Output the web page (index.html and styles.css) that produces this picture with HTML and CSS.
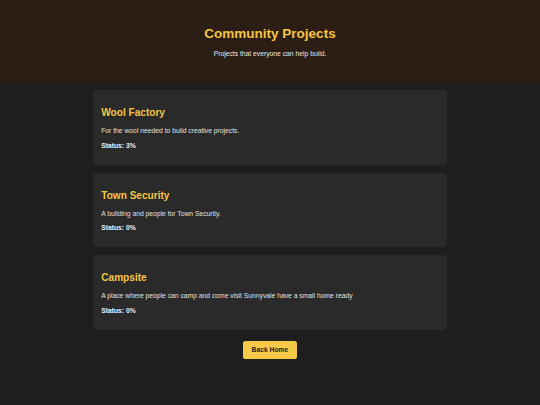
FILE: index.html
```html
<!DOCTYPE html>
<html lang="en">
<head>
<meta charset="utf-8">
<title>Community Projects</title>
<link rel="stylesheet" href="styles.css">
</head>
<body>
<header class="site-header">
  <h1 class="site-title">Community Projects</h1>
  <p class="site-subtitle">Projects that everyone can help build.</p>
</header>
<main class="container">
  <section class="project-card">
    <h2 class="project-title">Wool Factory</h2>
    <p class="project-desc">For the wool needed to build creative projects.</p>
    <p class="project-status">Status: 3%</p>
  </section>
  <section class="project-card">
    <h2 class="project-title">Town Security</h2>
    <p class="project-desc">A building and people for Town Security.</p>
    <p class="project-status">Status: 0%</p>
  </section>
  <section class="project-card">
    <h2 class="project-title">Campsite</h2>
    <p class="project-desc">A place where people can camp and come visit Sunnyvale have a small home ready</p>
    <p class="project-status">Status: 0%</p>
  </section>
  <div class="actions">
    <a class="btn" href="#">Back Home</a>
  </div>
</main>
</body>
</html>
```
FILE: styles.css
```css
html, body {
  margin: 0;
  padding: 0;
}
body {
  background: #1e1e1e;
  color: #e0e0e0;
  font-family: "Liberation Sans", Arial, sans-serif;
  font-size: 6.75px;
  line-height: 7.8px;
  min-height: 405px;
}
.site-header {
  background: #2c1e14;
  text-align: center;
  padding: 16.9px 8.4px;
}
.site-title {
  color: #f5c542;
  font-size: 13.5px;
  line-height: 15.5px;
  font-weight: bold;
  margin: 9.05px 0;
}
.site-subtitle {
  margin: 6.75px 0;
  color: #e6e6e6;
}
.container {
  max-width: 354.4px;
  margin: 0 auto;
  padding: 8.44px;
}
.project-card {
  background: #2a2a2a;
  border-radius: 4.2px;
  padding: 8.44px;
  margin-bottom: 8.2px;
}
.project-title {
  color: #f5c542;
  font-size: 10.1px;
  line-height: 11.6px;
  font-weight: bold;
  margin: 8.4px 0;
}
.project-desc {
  margin: 6.75px 0;
  color: #e0e0e0;
}
.project-status {
  margin: 6.75px 0;
  font-weight: bold;
  color: #f0f0f0;
}
.actions {
  text-align: center;
  margin-top: 11.4px;
}
.btn {
  display: inline-block;
  background: #f7c948;
  color: #1e1e1e;
  font-weight: bold;
  text-decoration: none;
  padding: 5.2px 8.9px;
  border-radius: 2.6px;
}
```
